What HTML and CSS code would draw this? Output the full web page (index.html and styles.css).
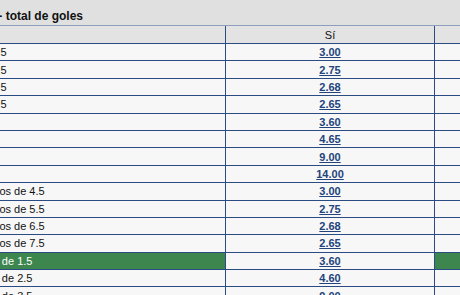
FILE: index.html
```html
<!DOCTYPE html>
<html lang="es">
<head>
<meta charset="utf-8">
<title>Ambos equipos marcan - total de goles</title>
<link rel="stylesheet" href="styles.css">
</head>
<body>
<div class="page">
  <div class="title"><span class="title-text">Ambos equipos marcan - total de goles</span></div>
  <table class="odds">
    <thead>
      <tr><th class="c-label"></th><th class="c-yes">Sí</th><th class="c-no">No</th></tr>
    </thead>
    <tbody>
      <tr><td class="c-label">Sí 4.5</td><td class="c-yes"><a href="#">3.00</a></td><td class="c-no"></td></tr>
      <tr><td class="c-label">Sí 5.5</td><td class="c-yes"><a href="#">2.75</a></td><td class="c-no"></td></tr>
      <tr><td class="c-label">Sí 6.5</td><td class="c-yes"><a href="#">2.68</a></td><td class="c-no"></td></tr>
      <tr><td class="c-label">Sí 7.5</td><td class="c-yes"><a href="#">2.65</a></td><td class="c-no"></td></tr>
      <tr><td class="c-label">0</td><td class="c-yes"><a href="#">3.60</a></td><td class="c-no"></td></tr>
      <tr><td class="c-label">1</td><td class="c-yes"><a href="#">4.65</a></td><td class="c-no"></td></tr>
      <tr><td class="c-label">2</td><td class="c-yes"><a href="#">9.00</a></td><td class="c-no"></td></tr>
      <tr><td class="c-label">3</td><td class="c-yes"><a href="#">14.00</a></td><td class="c-no"></td></tr>
      <tr><td class="c-label">Menos de 4.5</td><td class="c-yes"><a href="#">3.00</a></td><td class="c-no"></td></tr>
      <tr><td class="c-label">Menos de 5.5</td><td class="c-yes"><a href="#">2.75</a></td><td class="c-no"></td></tr>
      <tr><td class="c-label">Menos de 6.5</td><td class="c-yes"><a href="#">2.68</a></td><td class="c-no"></td></tr>
      <tr><td class="c-label">Menos de 7.5</td><td class="c-yes"><a href="#">2.65</a></td><td class="c-no"></td></tr>
      <tr class="is-selected"><td class="c-label">Más de 1.5</td><td class="c-yes"><a href="#">3.60</a></td><td class="c-no"></td></tr>
      <tr><td class="c-label">Más de 2.5</td><td class="c-yes"><a href="#">4.60</a></td><td class="c-no"></td></tr>
      <tr><td class="c-label">Más de 3.5</td><td class="c-yes"><a href="#">9.00</a></td><td class="c-no"></td></tr>
    </tbody>
  </table>
</div>
</body>
</html>
```

FILE: styles.css
```css
html, body {
  margin: 0;
  padding: 0;
  overflow: hidden;
  background: #f7f7f7;
}

body {
  font-family: "Liberation Sans", Arial, Helvetica, sans-serif;
  font-size: 11px;
  color: #111;
}

.page {
  margin-left: -30px;
  width: 700px;
}

.title {
  box-sizing: border-box;
  height: 25px;
  padding-top: 7px;
  line-height: 18px;
  padding-left: 8px;
  background: #e0e0e0;
  font-weight: bold;
  font-size: 12px;
  white-space: nowrap;
  text-indent: -119px;
}

.odds {
  border-collapse: separate;
  border-spacing: 0;
  table-layout: fixed;
  width: 673px;
  border-top: 1px solid #8d9ebe;
}

.odds th,
.odds td {
  box-sizing: border-box;
  padding: 0;
  border-bottom: 1px solid #2b4b83;
  vertical-align: middle;
  white-space: nowrap;
  overflow: hidden;
}

.odds thead tr {
  height: 18px;
}

.odds tbody tr {
  height: 17.4px;
}

.odds th {
  background: #e3e3e3;
  font-weight: normal;
  color: #111;
}

.odds td {
  background: #f7f7f7;
}

.c-label {
  width: 256px;
  padding-left: 8px !important;
  text-align: left;
  border-right: 1px solid #2b4b83;
}

.c-yes {
  width: 209px;
  text-align: center;
  border-right: 1px solid #2b4b83;
}

.c-no {
  width: 208px;
}

.c-yes a {
  color: #22437c;
  font-weight: bold;
  text-decoration: underline;
}

.odds tr.is-selected .c-label,
.odds tr.is-selected .c-no {
  background: #3d874e;
  color: #fff;
}
```
